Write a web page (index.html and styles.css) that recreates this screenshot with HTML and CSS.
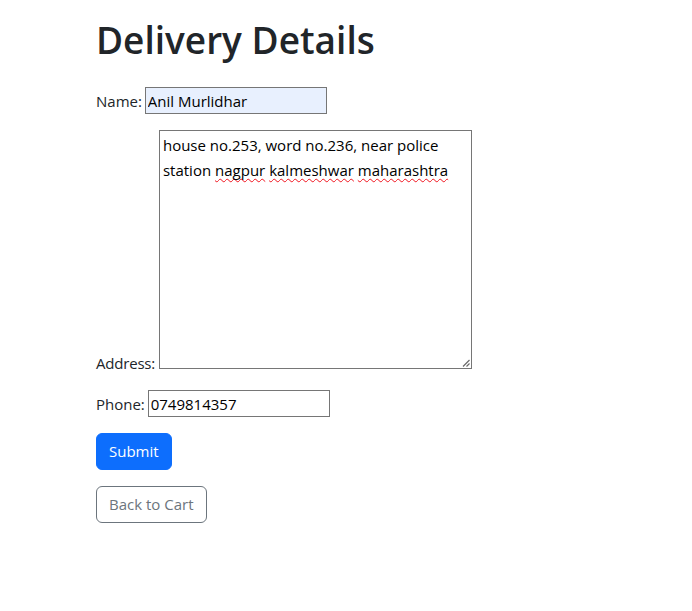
FILE: index.html
```html
<!DOCTYPE html>
<html lang="en">
<head>
<meta charset="utf-8">
<title>Delivery Details</title>
<link rel="stylesheet" href="styles.css">
</head>
<body>
<main class="container">
  <h1 class="title">Delivery Details</h1>
  <form class="delivery-form">
    <div class="field">
      <label for="name">Name:</label>
      <input id="name" class="text-input autofilled" type="text" value="Anil Murlidhar">
    </div>
    <div class="field field-address">
      <label class="label-tight">Address:</label>
      <div class="textarea" role="textbox" aria-multiline="true">house no.253, word no.236, near police<br>station <span class="misspelled">nagpur</span> <span class="misspelled">kalmeshwar</span> <span class="misspelled">maharashtra</span><svg class="grip" width="8" height="8" viewBox="0 0 8 8" aria-hidden="true"><path d="M1 7.5 L7.5 1 M4.5 7.5 L7.5 4.5" stroke="#6b6b6b" stroke-width="1.2" fill="none"/></svg></div>
    </div>
    <div class="field">
      <label for="phone">Phone:</label>
      <input id="phone" class="text-input" type="text" value="0749814357">
    </div>
    <div class="actions">
      <button type="button" class="btn btn-primary">Submit</button>
    </div>
    <div class="actions">
      <a class="btn btn-outline" href="#">Back to Cart</a>
    </div>
  </form>
</main>
</body>
</html>
```

FILE: styles.css
```css
* {
  box-sizing: border-box;
}

body {
  margin: 0;
  font-family: "Open Sans", "Noto Sans", sans-serif;
  font-size: 15px;
  line-height: 24px;
  color: #212529;
  background: #fff;
}

.container {
  max-width: 500px;
  margin: 0 auto;
  padding-top: 16px;
}

.title {
  margin: 0 0 23px;
  font-size: 37px;
  font-weight: 600;
  line-height: 48px;
}

.field {
  margin-bottom: 16px;
}

.field-address {
  margin-bottom: 15px;
}

.field label {
  margin-right: -1px;
}

.field .label-tight {
  letter-spacing: -0.2px;
  margin-right: 0;
}

.text-input {
  font: inherit;
  color: #000;
  line-height: 24px;
  height: 27px;
  width: 182px;
  padding: 0 2px;
  border: 1px solid #767676;
  border-radius: 0;
  background: #fff;
  vertical-align: baseline;
}

.autofilled {
  background: #e8f0fe;
}

/* overflow hidden puts the box's baseline at its bottom edge, so the
   label sits on the bottom of the text area like a native control */
.textarea {
  position: relative;
  display: inline-block;
  overflow: hidden;
  width: 313px;
  height: 239px;
  padding: 2px 3px;
  border: 1px solid #767676;
  color: #000;
  line-height: 25px;
  vertical-align: baseline;
}

.misspelled {
  text-decoration: underline wavy #f0141e;
  text-decoration-thickness: 1px;
  text-underline-offset: 2px;
  text-decoration-skip-ink: none;
}

.grip {
  position: absolute;
  right: 1px;
  bottom: 1px;
}

.actions {
  margin-bottom: 16px;
}

.btn {
  display: inline-block;
  font: inherit;
  font-size: 15px;
  line-height: 23px;
  padding: 6px 12px;
  border: 1px solid transparent;
  border-radius: 6px;
  text-decoration: none;
  cursor: pointer;
}

.btn-primary {
  background: #0d6efd;
  border-color: #0d6efd;
  color: #fff;
}

.btn-outline {
  background: #fff;
  border-color: #6c757d;
  color: #6c757d;
}
```
